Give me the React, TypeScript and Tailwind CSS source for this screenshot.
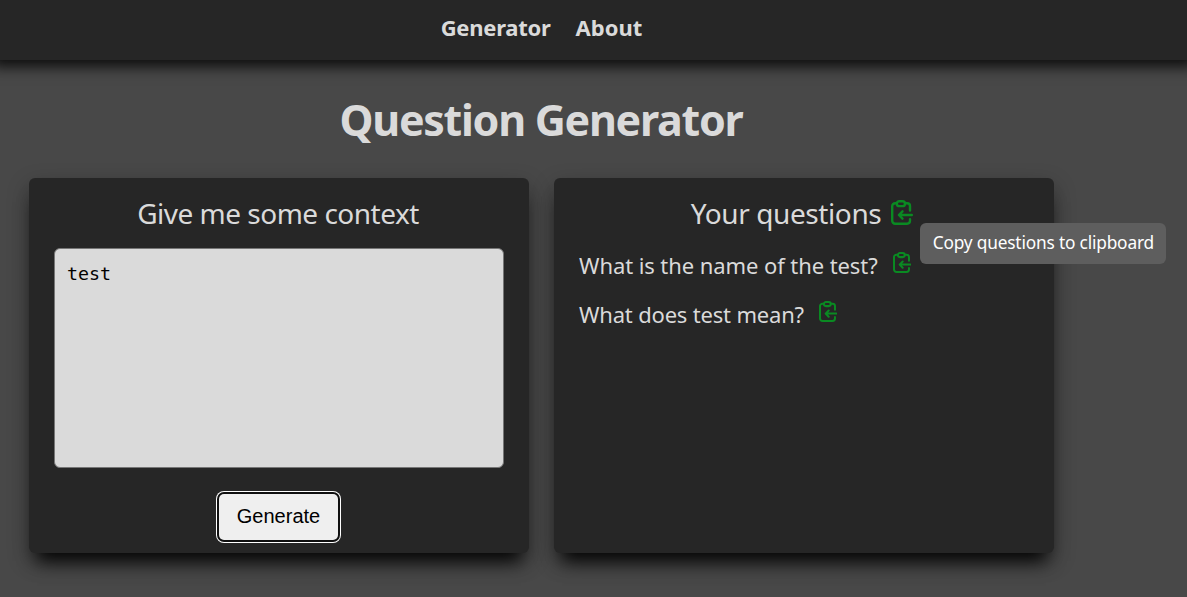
import React, { useState } from "react";

const questions = [
  { text: "What is the name of the test?", tracking: "tracking-[-0.08px]" },
  { text: "What does test mean?", tracking: "tracking-[-0.18px]" },
];

function ClipboardIcon({ className }: { className: string }) {
  return (
    <svg
      viewBox="0 0 22 25"
      fill="none"
      stroke="currentColor"
      strokeWidth="2.4"
      strokeLinecap="round"
      strokeLinejoin="round"
      className={className}
      aria-hidden="true"
    >
      <path d="M5.8 3.2H4.1a2.9 2.9 0 0 0-2.9 2.9v14.7a2.9 2.9 0 0 0 2.9 2.9h12a2.9 2.9 0 0 0 2.9-2.9v-1.6M14 3.2h2.1A2.9 2.9 0 0 1 19 6.1v4.4" />
      <rect x="5.8" y="1.2" width="8.2" height="4.9" rx="2.45" />
      <path d="M20.8 15H8M11.5 11.3 7.9 15l3.6 3.7" />
    </svg>
  );
}

function Card({ children }: { children: React.ReactNode }) {
  return (
    <section className="flex h-[375px] w-[500px] flex-col rounded-md bg-[#262626] px-[25px] shadow-[0_16px_17px_-8px_rgba(0,0,0,0.92),0_8px_22px_rgba(0,0,0,0.3)]">
      {children}
    </section>
  );
}

export default function App() {
  const [context, setContext] = useState("test");

  return (
    <div className="h-[597px] overflow-hidden bg-[#484848] font-['Noto_Sans',sans-serif] text-[#dadada]">
      <header className="h-[60px] bg-[#262626] shadow-[0_-1px_13px_8px_rgba(0,0,0,0.8)]">
        <nav className="flex w-[1083px] justify-center gap-[25px] pt-[12px] text-[22px] leading-[30px] font-bold">
          <a href="#generator" className="tracking-[-0.26px]">Generator</a>
          <a href="#about">About</a>
        </nav>
      </header>

      <main className="w-[1083px]">
        <h1 className="pt-[30px] pr-px text-center text-[43px] leading-[60px] font-bold tracking-[-1.28px]">
          Question Generator
        </h1>

        <div className="mt-[28px] flex justify-center gap-[25px]">
          <Card>
            <h2 className="pt-[16px] pr-[2px] text-center text-[28px] leading-[38px] tracking-[-0.5px]">
              Give me some context
            </h2>
            <textarea
              value={context}
              onChange={(event) => setContext(event.target.value)}
              className="mt-[16px] h-[220px] w-[450px] shrink-0 resize-none rounded-md border border-[#767676] bg-[#dadada] px-3 py-3 font-['DejaVu_Sans_Mono',monospace] text-[18.3px] leading-[25px] text-black outline-none"
            />
            <button className="mt-[26px] mr-px h-[46px] w-[119px] shrink-0 self-center rounded-[5px] bg-[#efefef] pb-[2px] font-['Liberation_Sans',sans-serif] text-[20px] text-black shadow-[0_0_0_2px_#101010,0_0_0_3px_#ffffff]">
              Generate
            </button>
          </Card>

          <Card>
            <h2 className="flex justify-center gap-[10px] pt-[16px] pr-[4px] text-[28px] leading-[38px] tracking-[-0.4px]">
              Your questions
              <span className="relative mt-[6px] h-[25px] w-[22px] text-[#0a8a22]">
                <ClipboardIcon className="h-[25px] w-[22px]" />
                <span
                  role="tooltip"
                  className="absolute top-[23px] left-[29px] flex h-[41px] w-[246px] items-center justify-center rounded-md bg-[#5e5e5e] pb-[2px] text-[17.3px] leading-6 tracking-[-0.18px] whitespace-nowrap text-white"
                >
                  Copy questions to clipboard
                </span>
              </span>
            </h2>
            <ul className="flex flex-col gap-[19px] pt-[18px] text-[22px] leading-[30px]">
              {questions.map(({ text, tracking }) => (
                <li key={text} className="flex gap-[15px]">
                  <span className={tracking}>{text}</span>
                  <ClipboardIcon className="mt-[2px] h-[21px] w-[18.5px] text-[#0a8a22]" />
                </li>
              ))}
            </ul>
          </Card>
        </div>
      </main>
    </div>
  );
}
